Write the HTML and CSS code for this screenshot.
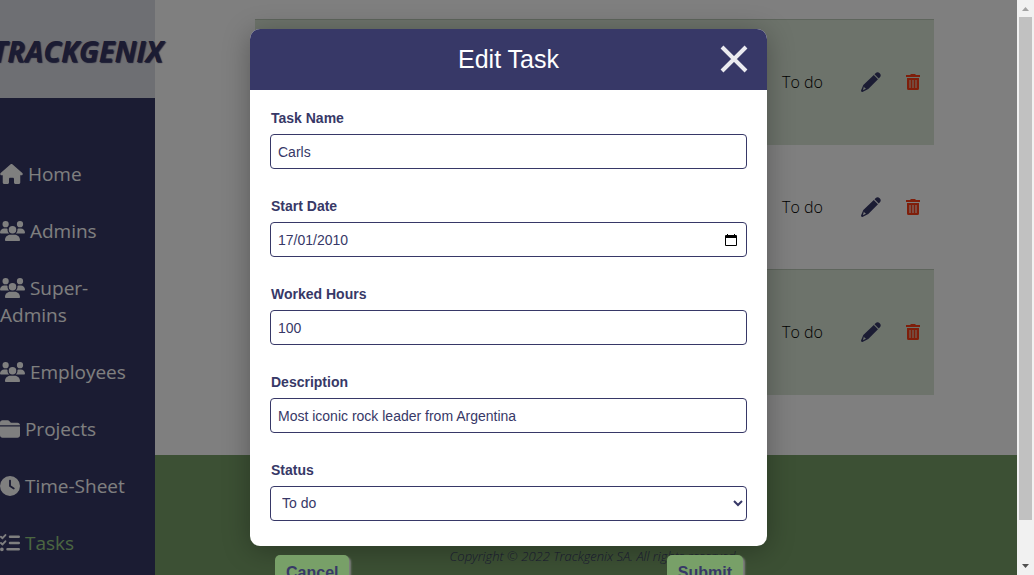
FILE: index.html
```html
<!DOCTYPE html>
<html lang="en">
<head>
<meta charset="utf-8">
<title>Trackgenix - Tasks</title>
<link rel="stylesheet" href="styles.css">
</head>
<body>
<svg class="sprite" aria-hidden="true">
  <symbol id="house" viewBox="0 0 576 512"><path d="M575.8 255.5c0 18-15 32.1-32 32.1h-32l.7 160.2c0 2.7-.2 5.4-.5 8.1V472c0 22.1-17.9 40-40 40H392c-22.1 0-40-17.9-40-40V384c0-17.700-14.300-32-32-32H256c-17.700 0-32 14.300-32 32v88c0 22.100-17.900 40-40 40H104c-22.100 0-40-17.900-40-40V287.600H32c-18 0-32-14-32-32.100c0-9 3-17 10-24L266.400 8c7-7 15-8 22-8s15 2 21 7L564.800 231.500c8 7 12 15 11 24z"/></symbol>
  <symbol id="users" viewBox="0 0 640 512"><path d="M144 0a80 80 0 1 1 0 160A80 80 0 1 1 144 0zM512 0a80 80 0 1 1 0 160A80 80 0 1 1 512 0zM0 298.700C0 239.800 47.800 192 106.700 192h42.700c15.900 0 31 3.500 44.600 9.700c-1.300 7.200-1.900 14.700-1.900 22.300c0 38.200 16.800 72.500 43.300 96H21.300C9.600 320 0 310.400 0 298.700zM404.600 320c26.600-23.500 43.300-57.800 43.300-96c0-7.600-.7-15-1.900-22.300c13.600-6.300 28.700-9.700 44.600-9.700h42.700C592.200 192 640 239.800 640 298.700c0 11.800-9.600 21.300-21.300 21.300zM224 224a96 96 0 1 1 192 0 96 96 0 1 1 -192 0zM128 485.300C128 411.700 187.700 352 261.300 352H378.700C452.300 352 512 411.700 512 485.300c0 14.700-11.900 26.700-26.700 26.700H154.700c-14.700 0-26.700-11.900-26.700-26.700z"/></symbol>
  <symbol id="folder" viewBox="0 0 512 512"><path d="M448 480H64c-35.300 0-64-28.700-64-64V192H512V416c0 35.300-28.700 64-64 64zm64-320H0V96C0 60.700 28.700 32 64 32H192c20.100 0 39.100 9.500 51.200 25.600l19.200 25.600c6 8.100 15.500 12.800 25.600 12.800H448c35.300 0 64 28.700 64 64z"/></symbol>
  <symbol id="clock" viewBox="0 0 512 512"><path d="M256 0a256 256 0 1 1 0 512A256 256 0 1 1 256 0zM232 120V256c0 8 4 15.500 10.700 20l96 64c11 7.400 25.900 4.400 33.300-6.700s4.400-25.900-6.700-33.300L280 243.200V120c0-13.300-10.700-24-24-24s-24 10.700-24 24z"/></symbol>
  <symbol id="checks" viewBox="0 0 512 512"><g fill="none" stroke="currentColor" stroke-width="48" stroke-linecap="round" stroke-linejoin="round"><path d="M24 96l40 38 74-82M24 256l40 38 74-82"/></g><path d="M256 64h224a32 32 0 0 1 0 64H256a32 32 0 0 1 0-64zm0 160h224a32 32 0 0 1 0 64H256a32 32 0 0 1 0-64zm-64 160h288a32 32 0 0 1 0 64H192a32 32 0 0 1 0-64zM48 368a48 48 0 1 1 0 96 48 48 0 0 1 0-96z"/></symbol>
  <symbol id="pencil" viewBox="0 0 20 20"><path fill-rule="evenodd" d="M12.800 3.100L17 7.300 7.300 17 1.500 20Q0 20 0 18.500L2.300 13.100zM2.900 14.600L2 18.200 5.100 16.600 3.800 16z"/><path d="M13.500 2.300l1-1a3 3 0 0 1 4.200 0 3 3 0 0 1 0 4.200L17.700 6.600z"/></symbol>
  <symbol id="trash" viewBox="0 0 14 16"><path d="M4.500 0h5v1H14v2H0V1h4.500z"/><path fill-rule="evenodd" d="M1 4h12v10.500a1.500 1.500 0 0 1-1.500 1.500h-9A1.500 1.500 0 0 1 1 14.500zM3 6v8h2V6zm3 0v8h2V6zm3 0v8h2V6z"/><path opacity=".5" d="M3 6h8v8H3z"/></symbol>
</svg>

<div class="page">
  <aside class="sidebar">
    <div class="brand">TRACKGENIX</div>
    <nav class="nav">
      <a href="#home"><svg class="icon icon-house"><use href="#house"/></svg> Home</a>
      <a href="#admins"><svg class="icon icon-users"><use href="#users"/></svg> Admins</a>
      <a href="#super-admins"><svg class="icon icon-users"><use href="#users"/></svg> Super-Admins</a>
      <a href="#employees"><svg class="icon icon-users"><use href="#users"/></svg> Employees</a>
      <a href="#projects"><svg class="icon"><use href="#folder"/></svg> Projects</a>
      <a href="#time-sheet"><svg class="icon"><use href="#clock"/></svg> Time-Sheet</a>
      <a href="#tasks"><svg class="icon"><use href="#checks"/></svg> <span class="current">Tasks</span></a>
    </nav>
  </aside>

  <div class="content">
    <main class="main">
      <table class="tasks">
        <tbody>
          <tr><td></td><td class="status">To do</td><td class="edit"><button class="action" aria-label="Edit"><svg class="pencil"><use href="#pencil"/></svg></button></td><td class="delete"><button class="action danger" aria-label="Delete"><svg class="trash"><use href="#trash"/></svg></button></td></tr>
          <tr><td></td><td class="status">To do</td><td class="edit"><button class="action" aria-label="Edit"><svg class="pencil"><use href="#pencil"/></svg></button></td><td class="delete"><button class="action danger" aria-label="Delete"><svg class="trash"><use href="#trash"/></svg></button></td></tr>
          <tr><td></td><td class="status">To do</td><td class="edit"><button class="action" aria-label="Edit"><svg class="pencil"><use href="#pencil"/></svg></button></td><td class="delete"><button class="action danger" aria-label="Delete"><svg class="trash"><use href="#trash"/></svg></button></td></tr>
        </tbody>
      </table>
    </main>
    <footer class="footer">Copyright © 2022 Trackgenix SA. All rights reserved.</footer>
  </div>

  <div class="overlay">
    <section class="modal" role="dialog" aria-labelledby="modal-title">
      <header class="modal-header">
        <h2 id="modal-title">Edit Task</h2>
        <button class="close" aria-label="Close"><svg viewBox="0 0 26 26"><path d="M1 1l24 24M25 1L1 25"/></svg></button>
      </header>
      <form class="form">
        <div class="field">
          <label for="name">Task Name</label>
          <input class="control" id="name" type="text" value="Carls">
        </div>
        <div class="field">
          <label for="date">Start Date</label>
          <div class="control date">
            <input id="date" type="text" value="17/01/2010">
            <button type="button" class="picker" aria-label="Show date picker"><svg viewBox="0 0 12 12"><path fill-rule="evenodd" d="M2 0h1v1h6V0h1v1h1a1 1 0 0 1 1 1v9a1 1 0 0 1-1 1H1a1 1 0 0 1-1-1V2a1 1 0 0 1 1-1h1zM1 4v7h10V4z"/></svg></button>
          </div>
        </div>
        <div class="field">
          <label for="hours">Worked Hours</label>
          <input class="control" id="hours" type="text" value="100">
        </div>
        <div class="field">
          <label for="description">Description</label>
          <input class="control" id="description" type="text" value="Most iconic rock leader from Argentina">
        </div>
        <div class="field">
          <label for="status">Status</label>
          <select class="control" id="status"><option>To do</option><option>In progress</option><option>Done</option></select>
        </div>
        <div class="buttons">
          <button type="button" class="btn">Cancel</button>
          <button type="submit" class="btn">Submit</button>
        </div>
      </form>
    </section>
  </div>
</div>

<div class="scrollbar" aria-hidden="true">
  <svg class="arrow arrow-up" viewBox="0 0 7 4"><path d="M0 4L3.500 0 7 4z"/></svg>
  <div class="track"><div class="thumb"></div></div>
  <svg class="arrow" viewBox="0 0 7 4"><path d="M0 0L3.500 4 7 0z"/></svg>
</div>
</body>
</html>
```

FILE: styles.css
```css
* {
  box-sizing: border-box;
}

body {
  margin: 0;
  display: flex;
  height: 100vh;
  overflow: hidden;
  color: #000;
  font-family: "Segoe UI", "Open Sans", "Noto Sans", sans-serif;
}

button {
  padding: 0;
  border: 0;
  background: none;
  font: inherit;
  color: inherit;
}

svg {
  display: block;
  fill: currentColor;
}

.sprite {
  display: none;
}

.page {
  position: relative;
  flex: 1;
  min-width: 0;
  display: flex;
  overflow: hidden;
}

/* Sidebar */
.sidebar {
  position: relative;
  z-index: 1;
  flex: none;
  width: 15vw;
  background: #373867;
}

.brand {
  display: flex;
  justify-content: center;
  align-items: center;
  height: 98px;
  padding-top: 2px;
  background: #dcdee6;
  color: #373867;
  font-size: 29px;
  font-weight: 700;
  font-style: italic;
  text-shadow: 1px 1px 1px #373867;
}

.nav {
  display: flex;
  flex-direction: column;
  gap: 30px;
  padding: 63px 8px 0 0;
}

.nav a {
  color: #fff;
  font-size: 19px;
  line-height: 27px;
  text-decoration: none;
}

.nav .current {
  color: #96cc82;
}

.icon {
  display: inline-block;
  width: 20px;
  height: 20px;
  vertical-align: -3px;
}

.icon-house {
  width: 23px;
}

.icon-users {
  width: 25px;
}

/* Task table */
.content {
  flex: 1;
  min-width: 0;
  display: flex;
  flex-direction: column;
}

.main {
  padding: 19px 83px 60px 100px;
  background: #fff;
}

.tasks {
  width: 100%;
  table-layout: fixed;
  border-collapse: collapse;
}

.tasks td {
  height: 125px;
  padding: 0;
  font-size: 16px;
  font-weight: 300;
}

.tasks tr:nth-child(odd) {
  background: #dae6d7;
  border-top: 1px solid #bccbb9;
}

.tasks .status {
  width: 79px;
}

.tasks .edit {
  width: 45px;
}

.tasks .delete {
  width: 28px;
}

.action {
  display: block;
  color: #373867;
}

.danger {
  color: #ff3c14;
}

.pencil {
  width: 20px;
  height: 20px;
}

.trash {
  width: 14px;
  height: 16px;
}

.footer {
  flex: 1;
  padding-top: 92px;
  background: #78a068;
  color: #373867;
  font-size: 13px;
  line-height: 18px;
  font-weight: 300;
  font-style: italic;
  text-align: center;
  padding-right: 8px;
  padding-left: 24px;
}

/* Dialog */
.overlay {
  position: absolute;
  inset: 0;
  z-index: 2;
  display: flex;
  justify-content: center;
  align-items: center;
  background: rgba(0, 0, 0, 0.5);
  font-family: Arial, "Liberation Sans", sans-serif;
}

.modal {
  width: 50vw;
  height: 90vh;
  border-radius: 10px;
  background: #fff;
  box-shadow: 0 4px 28px rgba(0, 0, 0, 0.3);
  color: #373867;
}

.modal-header {
  display: grid;
  grid-template-columns: 26px 1fr 26px;
  align-items: center;
  height: 61px;
  padding: 0 20px;
  border-radius: 10px 10px 0 0;
  background: #373867;
  color: #fff;
}

.modal-header h2 {
  grid-column: 2;
  margin: 0;
  font-size: 25px;
  font-weight: 400;
  text-align: center;
}

.close svg {
  width: 26px;
  height: 26px;
  fill: none;
  stroke: #ebebf0;
  stroke-width: 4;
  overflow: visible;
}

.form {
  display: flex;
  flex-direction: column;
  gap: 29px;
  padding: 20px 20px 0;
}

.field {
  display: flex;
  flex-direction: column;
  gap: 7px;
}

.field label {
  padding-left: 1px;
  font-size: 14px;
  line-height: 17px;
  font-weight: 700;
}

.control {
  width: 100%;
  height: 35px;
  padding: 1px 7px 0;
  border: 1px solid #373867;
  border-radius: 4px;
  background: #fff;
  color: #373867;
  font-family: inherit;
  font-size: 14px;
}

select.control {
  padding: 0 0 0 7px;
}

.date {
  display: flex;
  align-items: center;
  padding-right: 9px;
}

.date input {
  flex: 1;
  min-width: 0;
  padding: 0;
  border: 0;
  color: inherit;
  font: inherit;
}

.picker {
  color: #000;
}

.picker svg {
  width: 12px;
  height: 12px;
}

.buttons {
  display: flex;
  justify-content: space-between;
  padding: 5px 4px 0 5px;
}

.btn {
  padding: 0 11px;
  border-radius: 5px;
  background: #78a068;
  box-shadow: 2px 2px 2px #808080;
  font-size: 16px;
  line-height: 36px;
  font-weight: 700;
}

/* Scrollbar */
.scrollbar {
  flex: none;
  display: flex;
  flex-direction: column;
  align-items: center;
  gap: 6px;
  width: 17px;
  padding: 7px 0;
  background: #f1f1f1;
  color: #505050;
}

.arrow {
  width: 7px;
  height: 4px;
}

.arrow-up {
  color: #a3a3a3;
}

.track {
  flex: 1;
}

.thumb {
  width: 13px;
  height: 93%;
  background: #c1c1c1;
}
```
